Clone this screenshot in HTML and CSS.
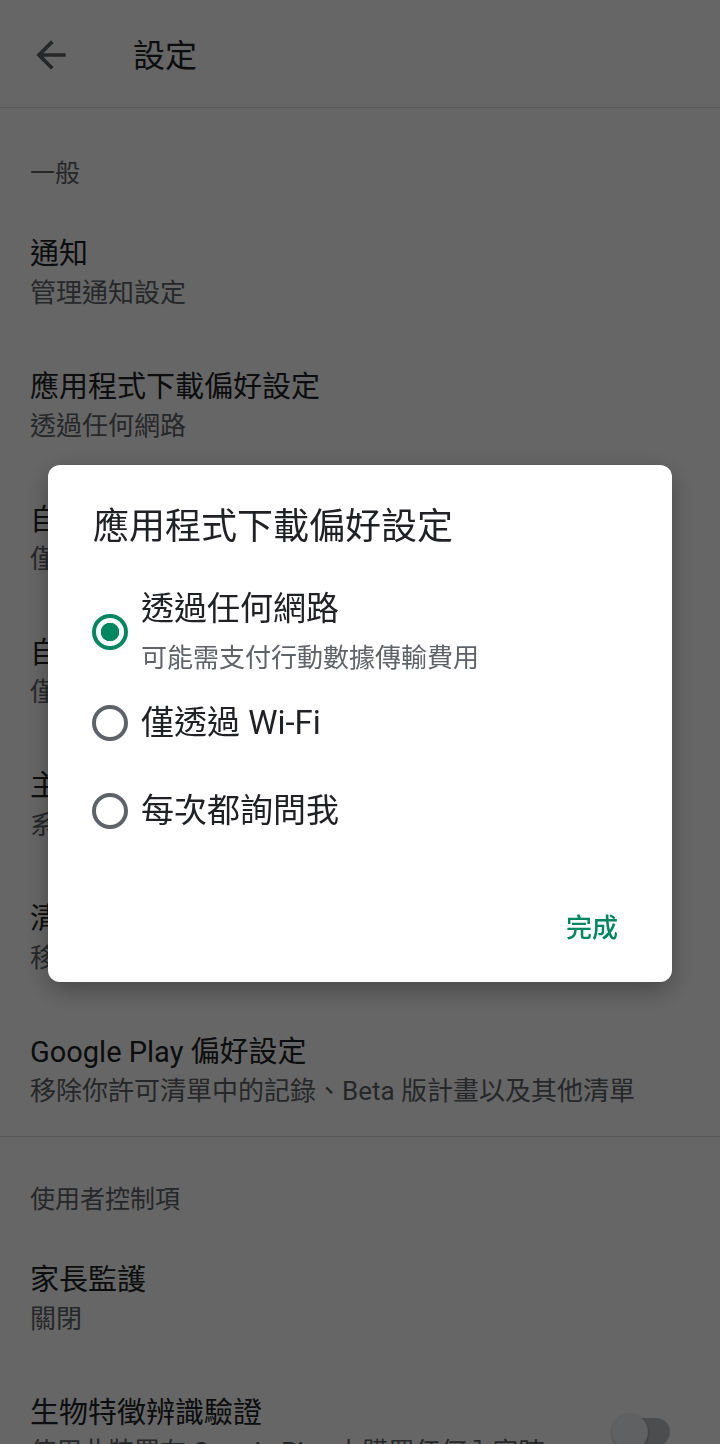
FILE: index.html
```html
<!DOCTYPE html>
<html lang="zh-Hant">
<head>
    <meta charset="UTF-8">
    <meta name="viewport" content="width=device-width, initial-scale=1.0">
    <title>設定</title>
    <link rel="stylesheet" href="styles.css">
</head>
<body>
<header class="toolbar">
    <button class="back" aria-label="返回">
        <svg viewBox="0 0 24 24" width="44" height="44">
            <path d="M20 11H7.83l5.59-5.59L12 4l-8 8 8 8 1.41-1.41L7.83 13H20v-2z"/>
        </svg>
    </button>
    <h1 class="toolbar-title">設定</h1>
</header>

<main class="settings">
    <!-- 一般 -->
    <section class="group">
        <h2 class="group-title">一般</h2>
        <div class="item">
            <div class="item-title">通知</div>
            <div class="item-sub">管理通知設定</div>
        </div>
        <div class="item">
            <div class="item-title">應用程式下載偏好設定</div>
            <div class="item-sub">透過任何網路</div>
        </div>
        <div class="item">
            <div class="item-title">自動更新應用程式</div>
            <div class="item-sub">僅透過 Wi-Fi</div>
        </div>
        <div class="item">
            <div class="item-title">自動播放影片</div>
            <div class="item-sub">僅透過 Wi-Fi</div>
        </div>
        <div class="item">
            <div class="item-title">主題</div>
            <div class="item-sub">系統預設</div>
        </div>
        <div class="item">
            <div class="item-title">清除裝置搜尋記錄</div>
            <div class="item-sub">移除你在這部裝置上進行的搜尋</div>
        </div>
        <div class="item">
            <div class="item-title">Google Play 偏好設定</div>
            <div class="item-sub">移除你許可清單中的記錄、Beta 版計畫以及其他清單</div>
        </div>
    </section>

    <!-- 使用者控制項 -->
    <section class="group">
        <h2 class="group-title group-title-second">使用者控制項</h2>
        <div class="item">
            <div class="item-title">家長監護</div>
            <div class="item-sub">關閉</div>
        </div>
        <div class="item item-switch">
            <div class="item-text">
                <div class="item-title">生物特徵辨識驗證</div>
                <div class="item-sub">使用此裝置在 Google Play 上購買任何內容時需要驗證</div>
            </div>
            <span class="switch"><span class="switch-thumb"></span></span>
        </div>
    </section>
</main>

<div class="scrim">
    <div class="dialog">
        <h3 class="dialog-title">應用程式下載偏好設定</h3>
        <div class="options">
            <div class="option option-first">
                <span class="radio radio-checked"></span>
                <div class="option-text">
                    <div class="option-label">透過任何網路</div>
                    <div class="option-sub">可能需支付行動數據傳輸費用</div>
                </div>
            </div>
            <div class="option">
                <span class="radio"></span>
                <div class="option-text">
                    <div class="option-label">僅透過 Wi-Fi</div>
                </div>
            </div>
            <div class="option">
                <span class="radio"></span>
                <div class="option-text">
                    <div class="option-label">每次都詢問我</div>
                </div>
            </div>
        </div>
        <div class="dialog-actions">
            <button class="text-button">完成</button>
        </div>
    </div>
</div>
</body>
</html>
```

FILE: styles.css
```css
/* Цвета в духе Material */
:root {
    --color-text: #202124;
    --color-text-secondary: #5f6368;
    --color-divider: #dadce0;
    --color-primary: #01875f;
    --color-surface: #ffffff;
}

body {
    margin: 0;
    padding: 0;
    height: 1444px;
    overflow: hidden;
    background-color: var(--color-surface);
    color: var(--color-text);
    font-family: Roboto, "Noto Sans CJK TC", sans-serif;
}

/* Верхняя панель */
.toolbar {
    display: flex;
    align-items: center;
    height: 107px;
    padding-left: 29px;
    border-bottom: 1px solid var(--color-divider);
}

.back {
    display: flex;
    width: 44px;
    height: 44px;
    padding: 0;
    margin-top: 2px;
    border: none;
    background: none;
}

.back svg {
    fill: var(--color-text-secondary);
}

.toolbar-title {
    margin: 4px 0 0 60px;
    font-size: 32px;
    font-weight: 400;
    line-height: 44px;
}

/* Список настроек */
.group {
    padding-top: 50px;
    border-bottom: 1px solid var(--color-divider);
}

.group-title {
    margin: 0 0 15px;
    padding: 0 30px;
    font-size: 25px;
    font-weight: 400;
    line-height: 32px;
    color: var(--color-text-secondary);
}

.group-title-second {
    margin-top: -3px;
}

.item {
    padding: 29px 30px 26px;
}

.item-title {
    font-size: 29px;
    line-height: 40px;
}

.item-sub {
    font-size: 26px;
    line-height: 38px;
    color: var(--color-text-secondary);
    white-space: nowrap;
}

.item-switch {
    display: flex;
    align-items: center;
    gap: 70px;
    padding-right: 50px;
}

.item-text {
    flex: 1;
    min-width: 0;
}

.item-switch .item-sub {
    white-space: normal;
}

.switch {
    position: relative;
    display: block;
    flex: none;
    align-self: flex-start;
    width: 52px;
    height: 28px;
    margin-top: 25px;
    border-radius: 14px;
    background-color: #bdc1c6;
}

.switch-thumb {
    position: absolute;
    left: -6px;
    top: -4px;
    width: 36px;
    height: 36px;
    border-radius: 50%;
    background-color: #f1f3f4;
    box-shadow: 0 1px 3px rgba(0, 0, 0, 0.35);
}

/* Затемнение и диалог */
.scrim {
    position: fixed;
    inset: 0;
    display: flex;
    align-items: center;
    justify-content: center;
    padding-top: 3px;
    background-color: rgba(0, 0, 0, 0.6);
}

.dialog {
    width: 624px;
    box-sizing: border-box;
    padding: 43px 38px 33px 44px;
    border-radius: 12px;
    background-color: var(--color-surface);
    box-shadow: 0 8px 24px rgba(0, 0, 0, 0.3);
}

.dialog-title {
    margin: 0 0 39px 1px;
    font-size: 36px;
    font-weight: 400;
    line-height: 38px;
}

.option {
    display: flex;
    align-items: center;
    gap: 13px;
    min-height: 88px;
}

.option-first {
    padding: 3px 0;
}

.radio {
    flex: none;
    width: 36px;
    height: 36px;
    box-sizing: border-box;
    border: 4px solid var(--color-text-secondary);
    border-radius: 50%;
}

.radio-checked {
    border-color: var(--color-primary);
    background: radial-gradient(circle, var(--color-primary) 0 9px, transparent 9.5px);
}

.option-label {
    font-size: 33px;
    line-height: 42px;
}

.option-sub {
    margin-top: 10px;
    font-size: 26px;
    line-height: 36px;
    color: var(--color-text-secondary);
}

.dialog-actions {
    display: flex;
    justify-content: flex-end;
    margin-top: 46px;
}

.text-button {
    height: 48px;
    padding: 0 16px;
    border: none;
    background: none;
    font-family: inherit;
    font-size: 26px;
    font-weight: 500;
    color: var(--color-primary);
}
```
